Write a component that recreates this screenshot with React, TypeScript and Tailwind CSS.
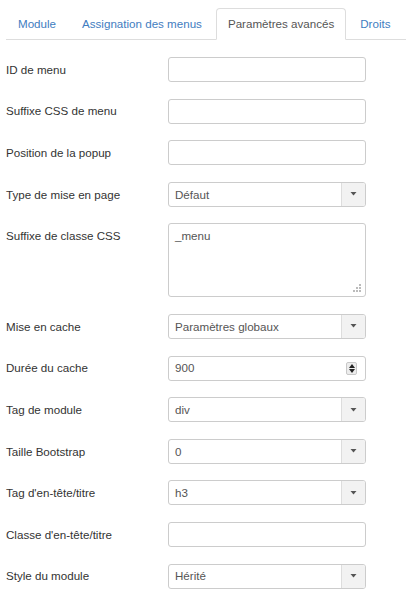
import React from 'react';

type Field = {
  label: string;
  kind: 'text' | 'select' | 'textarea' | 'number';
  value?: string;
};

const fields: Field[] = [
  { label: 'ID de menu', kind: 'text' },
  { label: 'Suffixe CSS de menu', kind: 'text' },
  { label: 'Position de la popup', kind: 'text' },
  { label: 'Type de mise en page', kind: 'select', value: 'Défaut' },
  { label: 'Suffixe de classe CSS', kind: 'textarea', value: '_menu' },
  { label: 'Mise en cache', kind: 'select', value: 'Paramètres globaux' },
  { label: 'Durée du cache', kind: 'number', value: '900' },
  { label: 'Tag de module', kind: 'select', value: 'div' },
  { label: 'Taille Bootstrap', kind: 'select', value: '0' },
  { label: "Tag d'en-tête/titre", kind: 'select', value: 'h3' },
  { label: "Classe d'en-tête/titre", kind: 'text' },
  { label: 'Style du module', kind: 'select', value: 'Hérité' },
];

const tabs = ['Module', 'Assignation des menus', 'Paramètres avancés', 'Droits'];

const Caret = () => (
  <svg width="7" height="4" viewBox="0 0 7 4">
    <path d="M0.5 0 L6.5 0 L3.5 3.5 Z" fill="#555" />
  </svg>
);

const Spinner = () => (
  <div className="flex h-[13px] w-[11px] flex-col items-center justify-center gap-[1px] rounded-[2px] border border-[#c8c8c8] bg-[#ececec]">
    <svg width="6" height="4" viewBox="0 0 6 4">
      <path d="M0 4 L6 4 L3 0 Z" fill="#222" />
    </svg>
    <svg width="6" height="4" viewBox="0 0 6 4">
      <path d="M0 0 L6 0 L3 4 Z" fill="#222" />
    </svg>
  </div>
);

const Grip = () => (
  <svg width="8" height="9" viewBox="0 0 8 9" className="absolute bottom-[3px] right-[4px]">
    {[
      [6, 0],
      [6, 3],
      [3, 3],
      [6, 6],
      [3, 6],
      [0, 6],
    ].map(([x, y]) => (
      <rect key={`${x}-${y}`} x={x} y={y} width="2" height="2" fill="#bbb" />
    ))}
  </svg>
);

const Control = ({ field }: { field: Field }) => {
  const box = 'w-[198px] rounded-[3px] border border-[#ccc] bg-white text-[#555]';

  if (field.kind === 'textarea') {
    return (
      <div className={`${box} relative h-[74px] px-[6px] pt-[4px] leading-[16px]`}>
        {field.value}
        <Grip />
      </div>
    );
  }

  if (field.kind === 'select') {
    return (
      <div className={`${box} flex h-[25px] items-stretch overflow-hidden`}>
        <div className="flex flex-1 items-center px-[6px]">{field.value}</div>
        <div className="flex w-[24px] items-center justify-center border-l border-[#ddd] bg-[#f2f2f2]">
          <Caret />
        </div>
      </div>
    );
  }

  if (field.kind === 'number') {
    return (
      <div className={`${box} flex h-[25px] items-center justify-between pl-[6px] pr-[8px]`}>
        <span>{field.value}</span>
        <Spinner />
      </div>
    );
  }

  return <div className={`${box} h-[25px]`} />;
};

export default function App() {
  return (
    <div className="min-h-[599px] overflow-hidden bg-white pl-[6px] pt-[8px] text-[11.6px] text-[#333] [font-family:'Liberation_Sans',Arial,sans-serif]">
      {/* Tabs */}
      <div className="flex border-b border-[#ddd]">
        {tabs.map((tab, i) => {
          const active = i === 2;
          return (
            <div
              key={tab}
              className={`-mb-px mr-[2px] flex h-[32px] shrink-0 items-center whitespace-nowrap rounded-t-[4px] border px-[11px] ${
                active
                  ? 'border-[#ddd] border-b-white bg-white text-[#555]'
                  : 'border-transparent text-[#3f7dbf]'
              }`}
            >
              {tab}
            </div>
          );
        })}
      </div>

      {/* Form */}
      <div className="mt-[17px] flex flex-col">
        {fields.map((field) => (
          <div key={field.label} className="mb-[16.6px] flex items-start">
            <div className="flex h-[25px] w-[162px] shrink-0 items-center whitespace-nowrap">{field.label}</div>
            <Control field={field} />
          </div>
        ))}
      </div>
    </div>
  );
}
